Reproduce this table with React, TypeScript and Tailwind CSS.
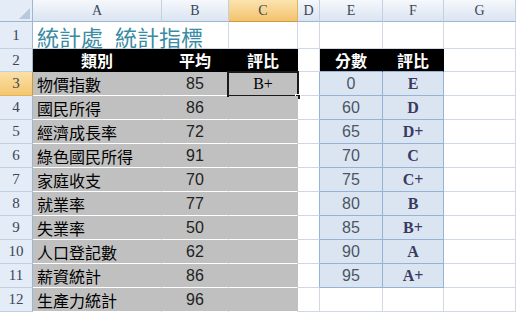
import React from 'react';

const rows = [
  ['物價指數', '85'],
  ['國民所得', '86'],
  ['經濟成長率', '72'],
  ['綠色國民所得', '91'],
  ['家庭收支', '70'],
  ['就業率', '77'],
  ['失業率', '50'],
  ['人口登記數', '62'],
  ['薪資統計', '86'],
  ['生產力統計', '96'],
];

const grades = [
  ['0', 'E'],
  ['60', 'D'],
  ['65', 'D+'],
  ['70', 'C'],
  ['75', 'C+'],
  ['80', 'B'],
  ['85', 'B+'],
  ['90', 'A'],
  ['95', 'A+'],
];

const cjk = "font-['Noto_Sans_CJK_TC',sans-serif]";
const grid = 'border-r border-b border-[#d0d7e5]';
const colHead =
  "flex items-center justify-center border-r border-b border-r-[#c3d0e0] border-b-[#9eb6ce] bg-linear-to-b from-[#f5f8fc] to-[#dbe4f1] text-[14px] text-[#3a4656] font-['Liberation_Serif',serif]";
const colHeadSel =
  "flex items-center justify-center border-r border-b border-r-[#e0b560] border-b-[#c99a40] bg-linear-to-b from-[#fbe3ae] to-[#f3c36c] text-[14px] text-[#3a4656] font-['Liberation_Serif',serif]";
const rowHead =
  "flex items-center justify-center border-r border-b border-r-[#9eb6ce] border-b-[#c3d0e0] bg-[#e4ecf7] text-[15px] text-[#3a4656] font-['Liberation_Serif',serif]";
const rowHeadSel =
  "flex items-center justify-center border-r border-b border-r-[#c99a40] border-b-[#e0b560] bg-linear-to-b from-[#fbe0a6] to-[#f5c66e] text-[15px] text-[#3a4656] font-['Liberation_Serif',serif]";
const gray = 'flex items-center border-r border-b border-r-[#c0c0c0] border-b-white bg-[#c0c0c0]';
const black = `flex items-center justify-center border-r border-b border-black bg-black text-white font-bold text-[16px] leading-none ${cjk}`;
const blueCell = 'flex items-center justify-center border-r border-b border-[#95b3d7] bg-[#dbe5f1]';

export default function App() {
  return (
    <div className="w-[516px] h-[312px] overflow-hidden bg-white">
      <div className="grid grid-cols-[33px_129px_67px_69px_22px_63px_61px_72px] grid-rows-[22px_27px_23px_repeat(10,24px)]">
        {/* column headers */}
        <div className="relative border-r border-b border-r-[#9eb6ce] border-b-[#9eb6ce] bg-[#e4ecf7]">
          <svg className="absolute left-0 top-0" width="33" height="22">
            <polygon points="30,8 30,19 19,19" fill="#b8c8dd" />
          </svg>
        </div>
        <div className={colHead}>A</div>
        <div className={colHead}>B</div>
        <div className={colHeadSel}>C</div>
        <div className={colHead}>D</div>
        <div className={colHead}>E</div>
        <div className={colHead}>F</div>
        <div className={colHead}>G</div>

        {/* row 1 */}
        <div className={rowHead}>1</div>
        <div className={`col-span-2 flex items-center pl-[4px] pt-[2px] text-[22px] leading-none text-[#3b8ba5] ${cjk} ${grid}`}>
          <span>統計處</span>
          <span className="ml-[12px]">統計指標</span>
        </div>
        <div className={grid} />
        <div className={grid} />
        <div className={grid} />
        <div className={grid} />
        <div className={grid} />

        {/* row 2 */}
        <div className={rowHead}>2</div>
        <div className={black}>類別</div>
        <div className={black}>平均</div>
        <div className={black}>評比</div>
        <div className={grid} />
        <div className={`${black} border-b-[#95b3d7]`}>分數</div>
        <div className={`${black} border-b-[#95b3d7]`}>評比</div>
        <div className={grid} />

        {rows.map(([name, avg], i) => {
          const r = i + 3;
          const g = grades[i];
          return (
            <React.Fragment key={r}>
              <div className={r === 3 ? rowHeadSel : rowHead}>{r}</div>
              <div className={`${gray} pl-[4px] text-[16px] leading-none text-black ${cjk}`}>{name}</div>
              <div className={`${gray} justify-center text-[16px] text-[#222] font-['Liberation_Sans',sans-serif]`}>
                {avg}
              </div>
              <div className={`${gray} relative justify-center text-[16px] text-black font-['Liberation_Serif',serif]`}>
                {r === 3 && (
                  <>
                    B+
                    <div className="absolute -left-[2px] -right-[2px] -top-[1px] -bottom-[2px] border-2 border-[#1a1a1a]" />
                    <div className="absolute -right-[4px] -bottom-[5px] w-[6px] h-[6px] bg-[#1a1a1a] border border-white" />
                  </>
                )}
              </div>
              <div className={`border-b border-b-[#d0d7e5] border-r ${g ? 'border-r-[#95b3d7]' : 'border-r-[#d0d7e5]'}`} />
              {g ? (
                <>
                  <div className={`${blueCell} text-[16px] text-[#4a5566] font-['Liberation_Sans',sans-serif]`}>{g[0]}</div>
                  <div className={`${blueCell} text-[16px] font-bold text-[#3a3a62] font-['Liberation_Serif',serif]`}>{g[1]}</div>
                </>
              ) : (
                <>
                  <div className={grid} />
                  <div className={grid} />
                </>
              )}
              <div className={grid} />
            </React.Fragment>
          );
        })}
      </div>
    </div>
  );
}
